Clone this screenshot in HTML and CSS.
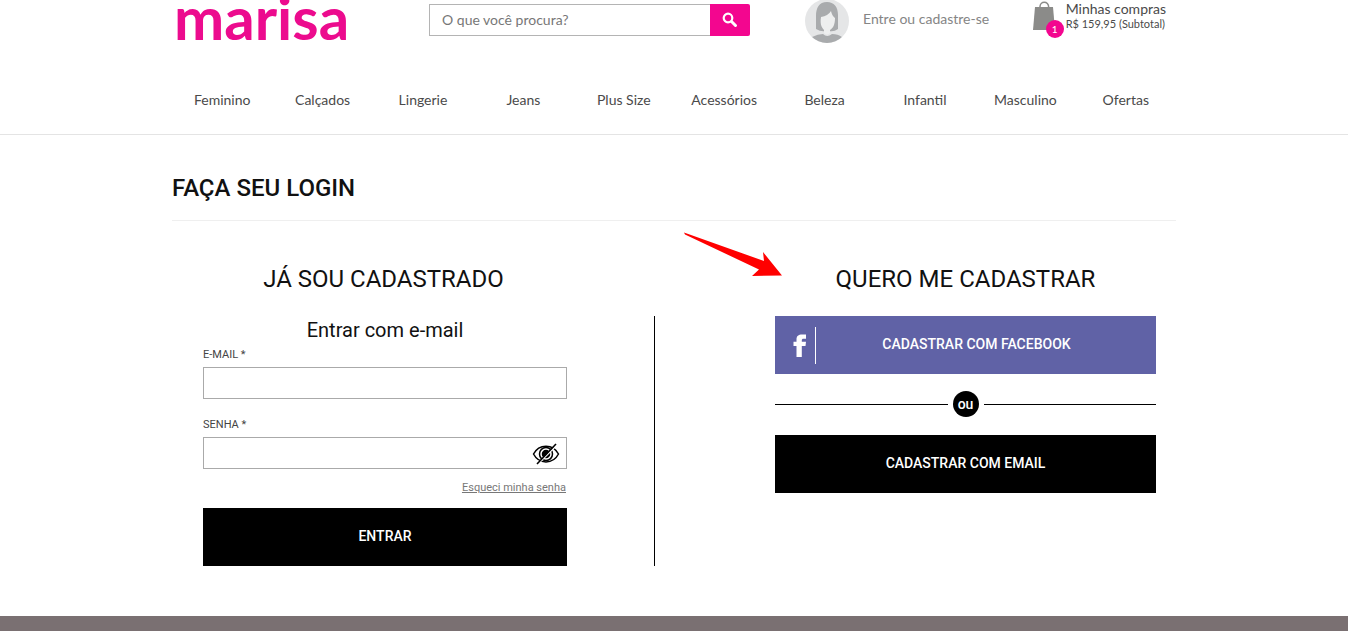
FILE: index.html
```html
<!DOCTYPE html>
<html lang="pt-BR">
<head>
<meta charset="utf-8">
<meta name="viewport" content="width=device-width, initial-scale=1">
<title>Marisa - Faça seu login</title>
<link rel="stylesheet" href="styles.css">
</head>
<body>
<header class="header">
  <div class="container topbar">
    <a class="logo" href="#">marisa</a>
    <form class="search" role="search">
      <input class="search-input" type="search" placeholder="O que você procura?" aria-label="Buscar">
      <button class="search-button" type="button" aria-label="Pesquisar">
        <svg width="16" height="16" viewBox="0 0 16 16" fill="none" stroke="#fff"><circle cx="6" cy="6" r="4.300" stroke-width="2.200"/><path d="M9.500 9.500l4 4" stroke-width="3" stroke-linecap="round"/></svg>
      </button>
    </form>
    <a class="account" href="#">
      <svg width="44" height="44" viewBox="0 0 44 44"><defs><clipPath id="disc"><circle cx="22" cy="22" r="22"/></clipPath></defs><g clip-path="url(#disc)"><path fill="#e5e6e7" d="M0 0h44v44H0z"/><path fill="#a9abad" d="M22 3C14 3 11 9 11 17v13q5 3 10 2h3q5 1 9-2V16C33 8 29 3 22 3z"/><path fill="#eeefef" d="M16 18q7-1 10-6 1 5 4 7c0 7-2 10-5 12v3q-3 3-6 0v-3c-3-3-4-7-3-13z"/><path fill="#a9abad" d="M7 38q6-3 11-3 4 4 9 0 6 0 10 3v6H7z"/></g></svg>
      <span>Entre ou cadastre-se</span>
    </a>
    <a class="cart" href="#">
      <span class="bag">
        <svg width="24" height="29" viewBox="0 0 24 29"><path d="M7 9V5.500a4.300 4.300 0 0 1 8.600 0V9" fill="none" stroke="#8b8b89" stroke-width="1.500"/><path d="M2 6h18l2 23H0z" fill="#8b8b89"/></svg>
        <span class="badge">1</span>
      </span>
      <span class="cart-text"><span class="cart-title">Minhas compras</span><span class="cart-total">R$ 159,95 (Subtotal)</span></span>
    </a>
  </div>
  <nav class="container nav">
    <a href="#">Feminino</a><a href="#">Calçados</a><a href="#">Lingerie</a><a href="#">Jeans</a><a href="#">Plus Size</a><a href="#">Acessórios</a><a href="#">Beleza</a><a href="#">Infantil</a><a href="#">Masculino</a><a href="#">Ofertas</a>
  </nav>
</header>
<main class="container main">
  <h1 class="page-title">FAÇA SEU LOGIN</h1>
  <div class="columns">
    <h2 class="heading heading-login">JÁ SOU CADASTRADO</h2>
    <h2 class="heading heading-register">QUERO ME CADASTRAR</h2>
    <form class="login">
      <h3 class="subheading">Entrar com e-mail</h3>
      <label class="label" for="email">E-MAIL *</label>
      <input class="field" id="email" type="email">
      <label class="label" for="password">SENHA *</label>
      <div class="password">
        <input class="field" id="password" type="password">
        <button class="toggle" type="button" aria-label="Mostrar senha">
          <svg width="28" height="24" viewBox="0 0 28 24" fill="none" stroke="#000" stroke-width="1.500"><path d="M1.500 12C7 1.500 21 1.500 26.500 12 21 22.500 7 22.500 1.500 12z"/><circle cx="14" cy="12" r="6.500"/><circle cx="14" cy="12" r="3.500" fill="#000"/><path d="M6 22L25 3" stroke="#fff" stroke-width="1.500"/><path d="M5 22L24 2" stroke-width="1.600"/></svg>
        </button>
      </div>
      <a class="forgot" href="#">Esqueci minha senha</a>
      <button class="button" type="button">ENTRAR</button>
    </form>
    <div class="divider"></div>
    <section class="register">
      <button class="button facebook" type="button">
        <span class="facebook-icon"><svg width="14" height="23" viewBox="0 0 14 23"><path fill="#fff" d="M3.500 23V12H.500V7.700h3V5.400C3.500 2 5.500.500 9 .500h4v4.200h-2.300c-1.500 0-1.900.500-1.900 1.700v1.300H13L12.500 12H8.800v11z"/></svg></span>
        CADASTRAR COM FACEBOOK
      </button>
      <div class="or"><span>ou</span></div>
      <button class="button" type="button">CADASTRAR COM EMAIL</button>
    </section>
  </div>
  <svg class="arrow" width="100" height="46" viewBox="0 0 100 46"><path fill="#f00" d="M2 .500L82 29 81 20 100 43.500 70 44 77 37.500 3 2.500z"/></svg>
</main>
<footer class="footer"></footer>
</body>
</html>
```
FILE: styles.css
```css
* { box-sizing: border-box; }
body {
  margin: 0;
  min-height: 100vh;
  display: flex;
  flex-direction: column;
  background: #fff;
  color: #111;
  font-family: Roboto, sans-serif;
}
a { color: inherit; text-decoration: none; }
button, input { font: inherit; border-radius: 0; }
button { border: 0; cursor: pointer; }
svg { display: block; }
.container { width: 100%; max-width: 1004px; margin: 0 auto; }

.header {
  border-bottom: 1px solid #e4e4e4;
  font-family: Lato, sans-serif;
  color: #4a4a4a;
}
.topbar { display: flex; align-items: center; height: 40px; }
.logo {
  flex: 0 0 257px;
  align-self: flex-start;
  padding-left: 2px;
  color: #ec0b8e;
  font-size: 60px;
  line-height: 34px;
  font-weight: 700;
}
.search { display: flex; flex: 0 0 321px; height: 32px; }
.search-input {
  flex: 1;
  min-width: 0;
  padding: 0 12px 2px;
  border: 1px solid #b4b4b4;
  border-right: 0;
  font-size: 14px;
}
.search-input::placeholder { color: #777; }
.search-button {
  display: grid;
  place-items: center;
  width: 40px;
  padding: 0;
  background: #f3068f;
  border-radius: 0 2px 2px 0;
}
.account {
  display: flex;
  align-items: center;
  gap: 14px;
  margin-left: 55px;
  padding-top: 2px;
  font-size: 14px;
  color: #858585;
  white-space: nowrap;
}
.account span { padding-bottom: 6px; }
.cart {
  display: flex;
  align-self: flex-start;
  gap: 9px;
  margin-left: auto;
  margin-right: 10px;
  padding-top: 1px;
  white-space: nowrap;
}
.bag { position: relative; }
.badge {
  position: absolute;
  left: 13px;
  top: 19px;
  width: 18px;
  border-radius: 50%;
  background: #f3068f;
  color: #fff;
  font-size: 10px;
  line-height: 18px;
  text-align: center;
}
.cart-text { display: flex; flex-direction: column; }
.cart-title { font-size: 14px; line-height: 16px; }
.cart-total { font-size: 11px; line-height: 14px; }
.nav {
  display: grid;
  grid-template-columns: repeat(10, 1fr);
  padding: 50px 0 24px;
  font-size: 14px;
  line-height: 20px;
  text-align: center;
}

.main { position: relative; padding-bottom: 50px; }
.page-title {
  margin: 0;
  padding: 37px 0 16px;
  border-bottom: 1px solid #efefef;
  font-size: 24px;
  line-height: 32px;
  font-weight: 500;
}
.columns {
  display: grid;
  grid-template-columns: 364fr 87fr 1px 120fr 381fr;
  padding: 42px 20px 0 31px;
}
.heading {
  margin: 0;
  padding-bottom: 21px;
  font-size: 24px;
  line-height: 32px;
  font-weight: 400;
  text-align: center;
}
.heading-login { padding-right: 3px; }
.heading-register { grid-column: 5; }
.login { grid-column: 1; display: flex; flex-direction: column; }
.subheading {
  margin: 0;
  padding-bottom: 3px;
  font-size: 20px;
  line-height: 28px;
  font-weight: 400;
  text-align: center;
}
.label { padding-bottom: 4px; font-size: 11px; line-height: 16px; color: #444; }
.field {
  width: 100%;
  height: 32px;
  padding: 0 12px;
  border: 1px solid #aaa;
  margin-bottom: 18px;
}
.password { position: relative; }
.password .field { display: block; margin-bottom: 11px; }
.toggle { position: absolute; right: 7px; top: 5px; padding: 0; background: none; }
.forgot {
  align-self: flex-end;
  margin-bottom: 12px;
  padding-right: 1px;
  font-size: 11px;
  line-height: 16px;
  color: #777;
  text-decoration: underline;
}
.button {
  position: relative;
  width: 100%;
  height: 58px;
  padding: 0 0 2px;
  background: #000;
  color: #fff;
  font-size: 14px;
  font-weight: 500;
}
.divider { grid-column: 3; background: #000; }
.register { grid-column: 5; }
.facebook { background: #6062a6; padding-left: 22px; }
.facebook-icon {
  position: absolute;
  left: 0;
  top: 11px;
  display: flex;
  align-items: center;
  width: 41px;
  height: 37px;
  padding-left: 18px;
  border-right: 1px solid #fff;
}
.or { display: flex; align-items: center; gap: 5px; height: 61px; }
.or::before, .or::after { content: ""; flex: 1; height: 1px; background: #000; }
.or span {
  width: 26px;
  margin-bottom: 2px;
  border-radius: 50%;
  background: #000;
  color: #fff;
  font-size: 14px;
  font-weight: 500;
  line-height: 26px;
  text-align: center;
}
.arrow { position: absolute; left: 510px; top: 97px; }
.footer { flex: 1; min-height: 15px; background: #7a7072; }
```
